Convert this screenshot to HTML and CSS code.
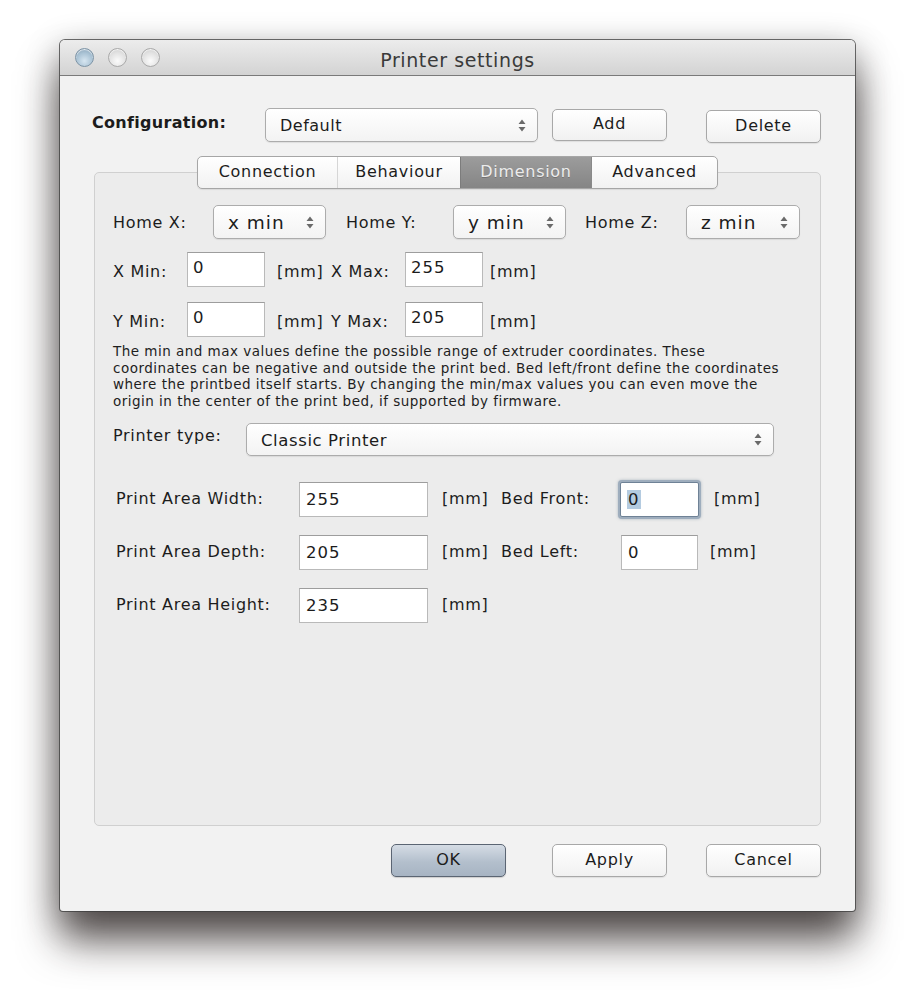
FILE: index.html
```html
<!DOCTYPE html>
<html>
<head>
<meta charset="utf-8">
<title>Printer settings</title>
<link rel="stylesheet" href="styles.css">
</head>
<body>
<div class="window">
  <div class="titlebar">
    <div class="lights">
      <span class="light light-active"></span>
      <span class="light"></span>
      <span class="light"></span>
    </div>
    <div class="title">Printer settings</div>
  </div>
  <div class="content">
    <div class="config-row">
      <span class="config-label">Configuration:</span>
      <div class="combo combo-config"><span class="combo-text">Default</span><svg class="arrows" width="8" height="13" viewBox="0 0 8 13"><path d="M4 0.5 L7.5 5 L0.5 5 Z M4 12.5 L7.5 8 L0.5 8 Z" fill="#6a6a6a"/></svg></div>
      <div class="btn btn-add">Add</div>
      <div class="btn btn-delete">Delete</div>
    </div>

    <div class="tabs-wrap">
      <div class="tabs">
        <div class="tab tab-conn">Connection</div>
        <div class="tab tab-beh">Behaviour</div>
        <div class="tab tab-dim tab-selected">Dimension</div>
        <div class="tab tab-adv">Advanced</div>
      </div>
    </div>

    <div class="group">
      <div class="home-row">
        <span class="lbl lbl-homex">Home X:</span>
        <div class="combo combo-home"><span class="combo-text">x min</span><svg class="arrows" width="8" height="13" viewBox="0 0 8 13"><path d="M4 0.5 L7.5 5 L0.5 5 Z M4 12.5 L7.5 8 L0.5 8 Z" fill="#6a6a6a"/></svg></div>
        <span class="lbl lbl-homey">Home Y:</span>
        <div class="combo combo-home"><span class="combo-text">y min</span><svg class="arrows" width="8" height="13" viewBox="0 0 8 13"><path d="M4 0.5 L7.5 5 L0.5 5 Z M4 12.5 L7.5 8 L0.5 8 Z" fill="#6a6a6a"/></svg></div>
        <span class="lbl lbl-homez">Home Z:</span>
        <div class="combo combo-home combo-homez"><span class="combo-text">z min</span><svg class="arrows" width="8" height="13" viewBox="0 0 8 13"><path d="M4 0.5 L7.5 5 L0.5 5 Z M4 12.5 L7.5 8 L0.5 8 Z" fill="#6a6a6a"/></svg></div>
      </div>

      <div class="minmax-row row-x">
        <span class="lbl lbl-min">X Min:</span>
        <div class="field field-small">0</div>
        <span class="unit unit-mid">[mm]</span>
        <span class="lbl lbl-max">X Max:</span>
        <div class="field field-small">255</div>
        <span class="unit unit-end">[mm]</span>
      </div>
      <div class="minmax-row row-y">
        <span class="lbl lbl-min">Y Min:</span>
        <div class="field field-small">0</div>
        <span class="unit unit-mid">[mm]</span>
        <span class="lbl lbl-max">Y Max:</span>
        <div class="field field-small">205</div>
        <span class="unit unit-end">[mm]</span>
      </div>

      <p class="desc">The min and max values define the possible range of extruder coordinates. These<br>coordinates can be negative and outside the print bed. Bed left/front define the coordinates<br>where the printbed itself starts. By changing the min/max values you can even move the<br>origin in the center of the print bed, if supported by firmware.</p>

      <div class="ptype-row">
        <span class="lbl lbl-ptype">Printer type:</span>
        <div class="combo combo-ptype"><span class="combo-text">Classic Printer</span><svg class="arrows" width="8" height="13" viewBox="0 0 8 13"><path d="M4 0.5 L7.5 5 L0.5 5 Z M4 12.5 L7.5 8 L0.5 8 Z" fill="#6a6a6a"/></svg></div>
      </div>

      <div class="area-row area-first">
        <span class="lbl lbl-area">Print Area Width:</span>
        <div class="field field-area">255</div>
        <span class="unit unit-area">[mm]</span>
        <span class="lbl lbl-bed">Bed Front:</span>
        <div class="field field-bed field-focus"><span class="sel">0</span></div>
        <span class="unit unit-bed">[mm]</span>
      </div>
      <div class="area-row">
        <span class="lbl lbl-area">Print Area Depth:</span>
        <div class="field field-area">205</div>
        <span class="unit unit-area">[mm]</span>
        <span class="lbl lbl-bed">Bed Left:</span>
        <div class="field field-bed field-bedleft">0</div>
        <span class="unit unit-bed2">[mm]</span>
      </div>
      <div class="area-row">
        <span class="lbl lbl-area">Print Area Height:</span>
        <div class="field field-area">235</div>
        <span class="unit unit-area">[mm]</span>
      </div>
    </div>

    <div class="button-row">
      <div class="btn btn-ok">OK</div>
      <div class="btn btn-apply">Apply</div>
      <div class="btn btn-cancel">Cancel</div>
    </div>
  </div>
</div>
</body>
</html>
```

FILE: styles.css
```css
html, body {
  margin: 0;
  padding: 0;
  background: #ffffff;
}

body {
  font-family: "DejaVu Sans", "Liberation Sans", sans-serif;
  color: #1c1c1c;
  font-size: 16px;
  letter-spacing: 0.7px;
  padding: 40px 0 0 60px;
  height: 1006px;
  box-sizing: border-box;
  overflow: hidden;
}

.window {
  width: 795px;
  height: 871px;
  background: #f2f2f2;
  border-radius: 5px 5px 3px 3px;
  box-shadow: 0 0 0 1px rgba(60, 60, 60, 0.75), 0 30px 40px rgba(30, 22, 20, 0.7), 0 8px 34px rgba(0, 0, 0, 0.3);
  box-sizing: border-box;
}

.titlebar {
  height: 36px;
  box-sizing: border-box;
  border-bottom: 1px solid #7a7a7a;
  border-radius: 5px 5px 0 0;
  background: linear-gradient(#ececec, #d3d3d3);
  display: flex;
  align-items: center;
}

.lights {
  display: flex;
  gap: 14px;
  padding-left: 15px;
  width: 100px;
  box-sizing: border-box;
}

.light {
  width: 19px;
  height: 19px;
  border-radius: 50%;
  box-sizing: border-box;
  border: 1px solid #a9a9a9;
  background: radial-gradient(circle at 50% 70%, #fbfbfb 0%, #e2e2e2 55%, #c9c9c9 100%);
  box-shadow: inset 0 1px 1px rgba(255,255,255,0.8);
}

.light-active {
  border-color: #7d94a6;
  background: radial-gradient(circle at 50% 70%, #d7e6f1 0%, #a9c2d4 55%, #7f9ab0 100%);
}

.title {
  flex: 1;
  text-align: center;
  font-size: 19px;
  color: #3a3a3a;
  margin-right: 100px;
  letter-spacing: 0.6px;
  padding-top: 4px;
}

.content {
  padding: 0 34px;
}

.config-row {
  display: flex;
  align-items: flex-start;
  margin-top: 32px;
  height: 35px;
}

.config-label {
  font-weight: bold;
  margin-left: -2px;
  width: 173px;
  padding-top: 5px;
  letter-spacing: 0.3px;
}

.combo {
  height: 34px;
  box-sizing: border-box;
  border: 1px solid #acacac;
  border-radius: 5px;
  background: linear-gradient(#ffffff, #f3f3f3);
  box-shadow: 0 1px 1px rgba(0,0,0,0.08);
  display: flex;
  align-items: center;
  justify-content: space-between;
  padding: 0 11px 0 14px;
}

.combo-text {
  padding-top: 1px;
}

.arrows {
  flex: none;
}

.combo-config {
  width: 273px;
  letter-spacing: 0.5px;
}

.btn {
  box-sizing: border-box;
  border: 1px solid #a8a8a8;
  border-radius: 5px;
  background: linear-gradient(#ffffff, #f1f1f1);
  box-shadow: 0 1px 1px rgba(0,0,0,0.08);
  width: 115px;
  height: 33px;
  display: flex;
  align-items: center;
  justify-content: center;
  padding-bottom: 3px;
}

.btn-add {
  margin-left: 14px;
  margin-top: 1px;
  height: 32px;
}

.btn-delete {
  margin-left: 39px;
  margin-top: 2px;
}

.tabs-wrap {
  display: flex;
  justify-content: center;
  margin-top: 13px;
  margin-bottom: -17px;
  position: relative;
  z-index: 1;
}

.tabs {
  display: flex;
  height: 33px;
  box-sizing: border-box;
  border: 1px solid #a6a6a6;
  border-radius: 5px;
  background: linear-gradient(#ffffff, #f2f2f2);
  overflow: hidden;
  box-shadow: 0 1px 1px rgba(0,0,0,0.08);
}

.tab {
  display: flex;
  align-items: center;
  justify-content: center;
  box-sizing: border-box;
  padding-bottom: 2px;
}

.tab-conn { width: 139px; }
.tab-beh { width: 123px; border-left: 1px solid #d6d6d6; }
.tab-dim { width: 132px; }
.tab-adv { width: 125px; }

.tab-selected {
  background: linear-gradient(#9c9c9c, #858585);
  color: #ececec;
  text-shadow: 0 1px 0 rgba(0,0,0,0.2);
  border-left: 1px solid #7c7c7c;
  border-right: 1px solid #8a8a8a;
}

.group {
  height: 654px;
  box-sizing: border-box;
  border: 1px solid #d0d0d0;
  border-radius: 5px;
  background: #ececec;
  padding: 32px 0 0 18px;
}

.lbl, .unit {
  white-space: nowrap;
}

.home-row {
  display: flex;
  align-items: center;
  height: 34px;
}

.lbl-homex { width: 100px; }
.lbl-homey { width: 107px; margin-left: 20px; }
.lbl-homez { width: 101px; margin-left: 19px; }

.combo-home {
  width: 113px;
  font-size: 18.5px;
  letter-spacing: 1px;
  justify-content: space-between;
  padding-left: 14px;
}

.combo-homez { width: 114px; }

.field {
  height: 35px;
  box-sizing: border-box;
  background: #ffffff;
  border: 1px solid #b9b9b9;
  border-top-color: #9d9d9d;
  padding: 5px 0 0 5px;
  display: flex;
  align-items: flex-start;
  font-size: 16.5px;
  letter-spacing: 1px;
}

.minmax-row {
  display: flex;
  align-items: center;
  height: 35px;
}

.row-x { margin-top: 13px; }
.row-y { margin-top: 15px; }

.lbl-min { width: 74px; }
.lbl-max { width: 74px; }
.field-small { width: 78px; }
.unit-mid { width: 54px; margin-left: 12px; }
.unit-end { margin-left: 7px; }

.minmax-row .lbl, .minmax-row .unit {
  padding-top: 3px;
}

.desc {
  margin: 6px 0 0 0;
  font-size: 13.5px;
  line-height: 16.5px;
  letter-spacing: 0.48px;
  color: #1e1e1e;
}

.ptype-row {
  display: flex;
  align-items: flex-start;
  margin-top: 14px;
}

.lbl-ptype {
  width: 133px;
  padding-top: 3px;
}

.combo-ptype {
  width: 528px;
  height: 33px;
  font-size: 16.5px;
  letter-spacing: 0.6px;
}

.area-row {
  display: flex;
  align-items: center;
  height: 35px;
  margin-top: 18px;
  padding-left: 3px;
}

.area-first { margin-top: 26px; }

.lbl-area { width: 183px; }
.field-area { width: 129px; padding: 0 0 0 6px; align-items: center; }
.unit-area { width: 59px; margin-left: 14px; }
.lbl-bed { width: 119px; }
.field-bed { width: 79px; padding: 0 0 0 6px; align-items: center; }
.unit-bed { margin-left: 15px; }
.unit-bed2 { margin-left: 12px; }
.field-bedleft { width: 77px; margin-left: 1px; }

.area-row .lbl, .area-row .unit {
  padding-bottom: 3px;
}

.field-focus {
  border: 1px solid #6f8296;
  box-shadow: 0 0 0 2px #9eadbd, 0 0 3px 2px rgba(110, 130, 150, 0.5);
  border-radius: 2px;
  margin-top: -1px;
}

.sel {
  background: #b4cbe0;
  padding: 0 1px;
}

.button-row {
  display: flex;
  justify-content: flex-end;
  margin-top: 18px;
}

.btn-ok {
  background: linear-gradient(#d5dce5, #b3bfcc 55%, #a7b4c3);
  border: 1px solid #5b6573;
  box-shadow: 0 1px 1px rgba(0,0,0,0.15);
}

.btn-apply { margin-left: 46px; }
.btn-cancel { margin-left: 39px; }
```
